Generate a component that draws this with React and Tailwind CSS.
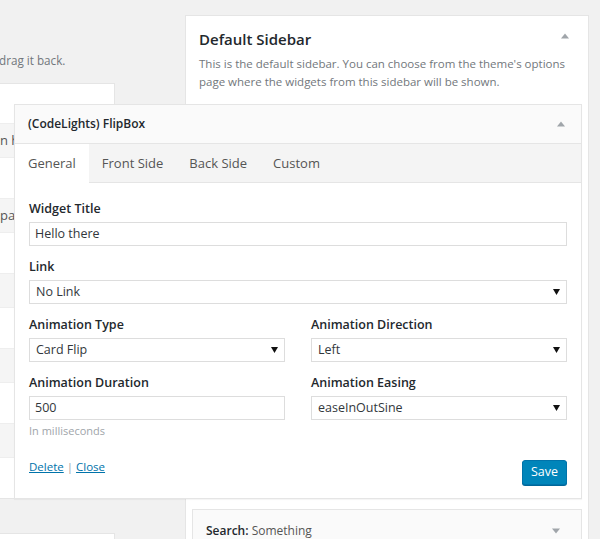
import React from 'react';

const font = "font-['Open_Sans',sans-serif]";

function Triangle({ up, className }) {
  return (
    <svg width="8" height="6" viewBox="0 0 8 6" className={className}>
      {up ? <path d="M4 0.5L8 5.5H0z" fill="currentColor" /> : <path d="M0 0.5h8L4 5.5z" fill="currentColor" />}
    </svg>
  );
}

function SelectBox({ value }) {
  return (
    <div className="flex h-[24px] items-center justify-between border border-[#dddddd] bg-white pl-[6px] pr-[6px] text-[12.5px] text-[#32373c]">
      <span>{value}</span>
      <svg width="7" height="6" viewBox="0 0 7 6">
        <path d="M0 0h7L3.5 6z" fill="#111" />
      </svg>
    </div>
  );
}

function TextBox({ value }) {
  return (
    <div className="flex h-[24px] items-center border border-[#dddddd] bg-white px-[5px] text-[12.5px] text-[#32373c]">
      {value}
    </div>
  );
}

function Field({ label, children, hint }) {
  return (
    <div className="mb-[12px]">
      <div className="mb-[4px] text-[12.5px] font-semibold leading-[18px] text-[#23282d]">{label}</div>
      {children}
      {hint && <div className="mt-[3px] text-[11px] leading-[16px] text-[#a0a5aa]">{hint}</div>}
    </div>
  );
}

const TABS = ['General', 'Front Side', 'Back Side', 'Custom'];

function FlipBox() {
  return (
    <div className="relative z-10 ml-[-178px] w-[568px] border border-[#e5e5e5] bg-white shadow-[0_1px_1px_rgba(0,0,0,0.04)]">
      <div className="flex h-[39px] items-center justify-between border-b border-[#e5e5e5] bg-[#fafafa] pl-[13px] pr-[16px]">
        <span className="text-[12px] font-semibold text-[#23282d]">(CodeLights) FlipBox</span>
        <Triangle up className="text-[#a0a5aa]" />
      </div>
      <div className="flex h-[39px] border-b border-[#e5e5e5] bg-[#f4f4f4]">
        {TABS.map((t, i) => (
          <div
            key={t}
            className={`flex h-[39px] items-center px-[13px] text-[13px] text-[#555] ${i === 0 ? 'bg-white' : ''}`}
          >
            {t}
          </div>
        ))}
      </div>
      <div className="px-[14px] pt-[17px] pb-[13px]">
        <Field label="Widget Title">
          <TextBox value="Hello there" />
        </Field>
        <Field label="Link">
          <SelectBox value="No Link" />
        </Field>
        <div className="grid grid-cols-2 gap-x-[26px]">
          <Field label="Animation Type">
            <SelectBox value="Card Flip" />
          </Field>
          <Field label="Animation Direction">
            <SelectBox value="Left" />
          </Field>
          <div className="-mb-[12px]">
            <Field label="Animation Duration" hint="In milliseconds">
              <TextBox value="500" />
            </Field>
          </div>
          <Field label="Animation Easing">
            <SelectBox value="easeInOutSine" />
          </Field>
        </div>
        <div className="mt-[19px] flex items-start justify-between">
          <div className="text-[11.5px] leading-[18px]">
            <span className="text-[#0073aa] underline">Delete</span>
            <span className="text-[#a0a5aa]"> | </span>
            <span className="text-[#0073aa] underline">Close</span>
          </div>
          <button className="mt-[2px] h-[25px] rounded-[3px] border border-[#0073aa] bg-[#0085ba] px-[8px] text-[12.5px] text-white shadow-[0_1px_0_#006799]">
            Save
          </button>
        </div>
      </div>
    </div>
  );
}

function LeftColumn() {
  const rows = [
    { h: 'h-[39px]', gray: false, text: '' },
    { h: 'h-[35px]', gray: true, text: 'n h' },
    { h: 'h-[40px]', gray: false, text: '' },
    { h: 'h-[35px]', gray: true, text: 'pa' },
    { h: 'h-[40px]', gray: false, text: '' },
    { h: 'h-[35px]', gray: true, text: '' },
    { h: 'h-[40px]', gray: false, text: '' },
    { h: 'h-[35px]', gray: true, text: '' },
    { h: 'h-[40px]', gray: false, text: '' },
    { h: 'h-[35px]', gray: true, text: '' },
    { h: 'h-[40px]', gray: false, text: '' },
  ];
  return (
    <div className="w-[115px] shrink-0">
      <div className="mt-[51px] ml-[-1px] whitespace-nowrap text-[11.7px] leading-[18px] text-[#72777c]">drag it back.</div>
      <div className="mt-[14px] border-y border-r border-[#e5e5e5] bg-white">
        {rows.map((r, i) => (
          <div
            key={i}
            className={`${r.h} flex items-center text-[13px] text-[#555] ${r.gray ? 'border-y border-[#eeeeee] bg-[#f5f5f5]' : ''}`}
          >
            {r.text}
          </div>
        ))}
      </div>
      <div className="mt-[34px] h-[20px] border-t border-r border-[#e5e5e5] bg-white" />
    </div>
  );
}

export default function App() {
  return (
    <div className={`h-[539px] w-[600px] overflow-hidden bg-[#f1f1f1] ${font}`}>
      <div className="flex">
        <LeftColumn />
        <div className="ml-[70px] mt-[15px] w-[404px] shrink-0 border border-[#e5e5e5] bg-white">
          <div className="px-[13px] pt-[12px]">
            <div className="flex items-start justify-between">
              <h2 className="text-[15px] font-semibold leading-[22px] text-[#23282d]">Default Sidebar</h2>
              <Triangle up className="mr-[6px] mt-[5px] text-[#a0a5aa]" />
            </div>
            <p className="mt-[5px] text-[11.5px] leading-[18px] text-[#72777c]">
              This is the default sidebar. You can choose from the theme's options page where the widgets from this sidebar will be shown.
            </p>
          </div>
          <div className="px-[6px] pt-[13px]">
            <FlipBox />
            <div className="mt-[10px] h-[60px] border border-[#e5e5e5] bg-[#fafafa] px-[13px] pt-[12px]">
              <div className="flex items-center justify-between">
                <span className="text-[12px] leading-[18px] text-[#23282d]">
                  <span className="font-semibold">Search:</span> <span className="text-[#555]">Something</span>
                </span>
                <Triangle className="mr-[8px] text-[#a0a5aa]" />
              </div>
            </div>
          </div>
        </div>
      </div>
    </div>
  );
}
